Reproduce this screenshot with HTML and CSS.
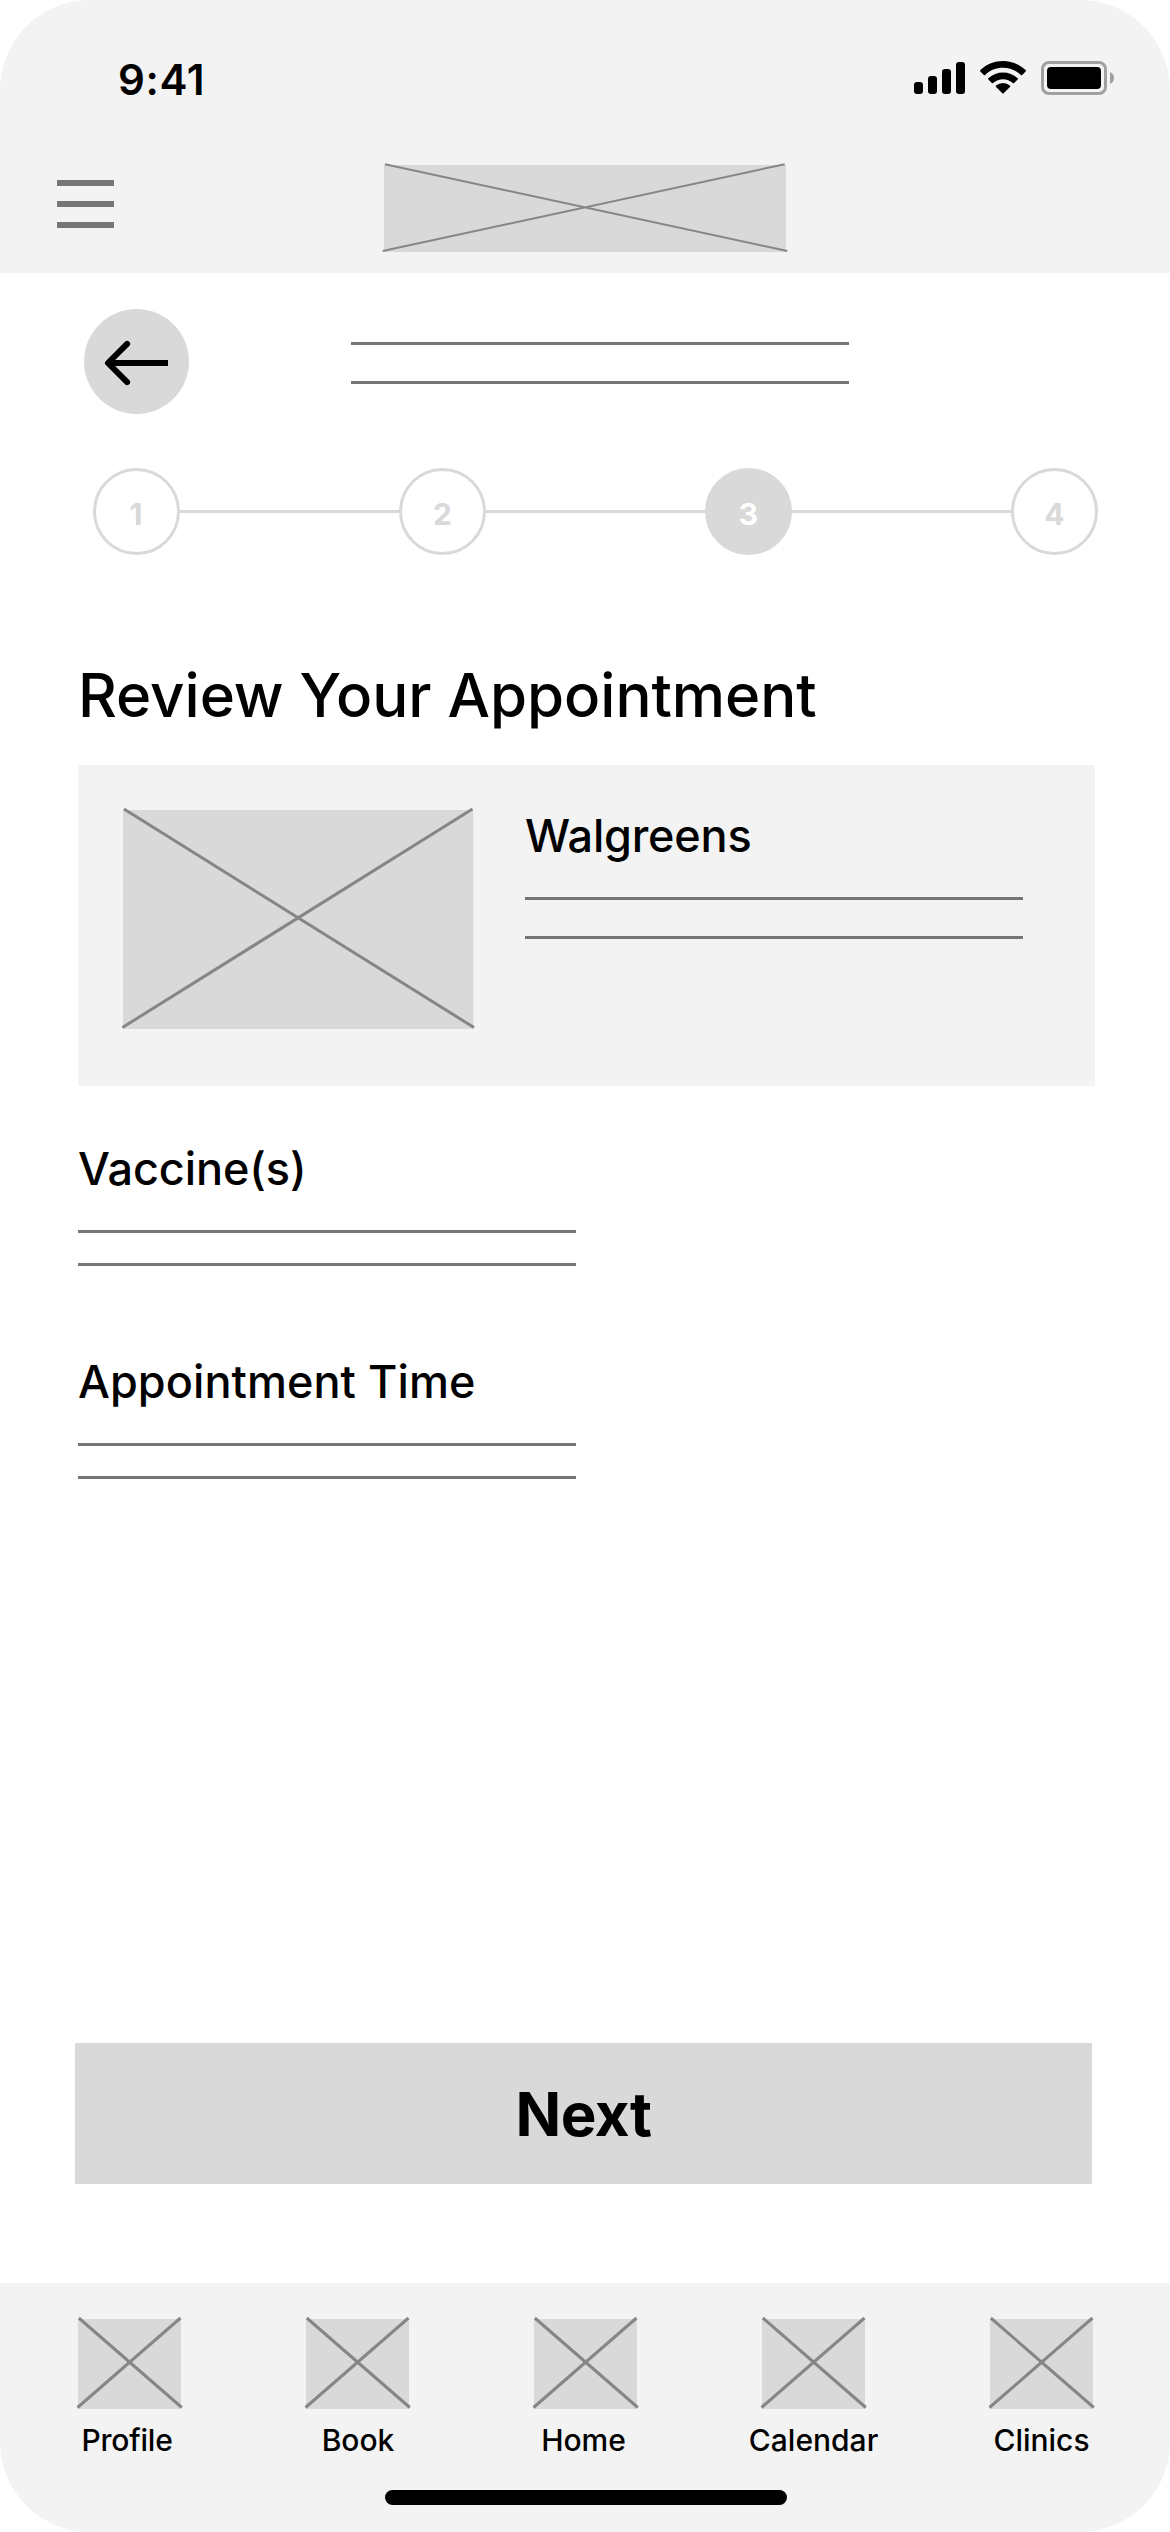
FILE: index.html
```html
<!DOCTYPE html>
<html lang="en">
<head>
<meta charset="utf-8">
<title>Review Your Appointment</title>
<link rel="stylesheet" href="styles.css">
</head>
<body>
<div class="screen">
  <header class="top">
    <div class="status">
      <span class="clock">9:41</span>
      <svg class="status-icons" width="204" height="40" viewBox="912 58 204 40">
        <rect x="914" y="82" width="9" height="12" rx="3"/>
        <rect x="928" y="76" width="9" height="18" rx="3"/>
        <rect x="942" y="69" width="9" height="25" rx="3"/>
        <rect x="956" y="62" width="9" height="32" rx="3"/>
        <path transform="translate(980.1 61) scale(3)" d="M7.637 2.277c2.216 0 4.347.852 5.953 2.379.12.118.314.116.433-.004l1.156-1.166a.32.32 0 0 0-.003-.456C10.961-1.01 4.311-1.01.096 3.03a.32.32 0 0 0-.003.456L1.25 4.652c.119.12.312.122.433.004 1.606-1.527 3.738-2.379 5.954-2.379ZM7.637 6.073c1.217 0 2.391.453 3.293 1.27.123.116.315.113.434-.006l1.154-1.167a.32.32 0 0 0-.004-.459c-2.748-2.556-7.004-2.556-9.752 0a.32.32 0 0 0-.005.459l1.155 1.167c.119.119.311.122.433.006.902-.817 2.075-1.27 3.292-1.27ZM9.95 8.627a.31.31 0 0 0-.01-.454 3.57 3.57 0 0 0-4.607 0 .31.31 0 0 0-.01.454l2.098 2.117a.3.3 0 0 0 .432 0Z"/>
        <rect class="battery-shell" x="1042.5" y="62.5" width="63" height="31" rx="6.5"/>
        <rect x="1047" y="67" width="54" height="22" rx="4"/>
        <path class="battery-cap" d="M1110 72c2.400 1 4 3.300 4 6s-1.600 5-4 6z"/>
      </svg>
    </div>
    <div class="brand-row">
      <div class="menu"><i></i><i></i><i></i></div>
      <svg class="logo" width="402" height="87" viewBox="0 0 402 87">
        <rect width="402" height="87"/>
        <path d="M1-.8 403.300 86M400.700-.8-1.300 86"/>
      </svg>
    </div>
  </header>

  <main class="content">
    <div class="title-row">
      <div class="back">
        <svg width="105" height="105" viewBox="0 0 105 105"><path d="M84 54H24"/><path class="head" d="M43.100 34.900 24 54l19.100 19.100"/></svg>
      </div>
      <div class="lines wide"><i></i><i></i></div>
    </div>

    <div class="steps">
      <span class="step first">1</span><i></i>
      <span class="step">2</span><i></i>
      <span class="step current">3</span><i></i>
      <span class="step">4</span>
    </div>

    <h1>Review Your Appointment</h1>

    <section class="card">
      <svg class="photo" width="350" height="219" viewBox="0 0 350 219">
        <rect width="350.300" height="219"/>
        <path d="M1-1 351 217.500M349.500-1-.6 217.500"/>
      </svg>
      <div class="place">
        <h2 class="place-name">Walgreens</h2>
        <div class="lines wide"><i></i><i></i></div>
      </div>
    </section>

    <section class="field">
      <h2 class="vaccine">Vaccine(s)</h2>
      <div class="lines"><i></i><i></i></div>
    </section>
    <section class="field">
      <h2 class="time">Appointment Time</h2>
      <div class="lines"><i></i><i></i></div>
    </section>

    <div class="next">Next</div>
  </main>

  <footer class="bottom">
    <nav class="tabs">
      <div class="tab"><svg width="103" height="90" viewBox="0 0 103 90"><rect width="103" height="90"/><path d="M.8-1 103.800 88.500M102.500-1-.5 88.500"/></svg><span class="profile">Profile</span></div>
      <div class="tab"><svg width="103" height="90" viewBox="0 0 103 90"><rect width="103" height="90"/><path d="M.8-1 103.800 88.500M102.500-1-.5 88.500"/></svg><span class="book">Book</span></div>
      <div class="tab"><svg width="103" height="90" viewBox="0 0 103 90"><rect width="103" height="90"/><path d="M.8-1 103.800 88.500M102.500-1-.5 88.500"/></svg><span class="home">Home</span></div>
      <div class="tab"><svg width="103" height="90" viewBox="0 0 103 90"><rect width="103" height="90"/><path d="M.8-1 103.800 88.500M102.500-1-.5 88.500"/></svg><span>Calendar</span></div>
      <div class="tab"><svg width="103" height="90" viewBox="0 0 103 90"><rect width="103" height="90"/><path d="M.8-1 103.800 88.500M102.500-1-.5 88.500"/></svg><span>Clinics</span></div>
    </nav>
    <div class="home-bar"></div>
  </footer>
</div>
</body>
</html>
```
FILE: styles.css
```css
* { box-sizing: border-box; }
body { margin: 0; background: #fff; }
h1, h2 { margin: 0; font-weight: 500; }
svg { display: block; overflow: visible; flex: none; }

.screen {
  width: 1170px;
  height: 2532px;
  display: flex;
  flex-direction: column;
  overflow: hidden;
  border-radius: 90px;
  background: #fff;
  color: #000;
  font-family: Inter, "Liberation Sans", sans-serif;
}

/* Header */
.top { height: 273px; background: #f3f3f3; }
.status {
  height: 165px;
  padding: 58px 54px 0 118px;
  display: flex;
  justify-content: space-between;
  align-items: flex-start;
}
.clock { font-size: 42px; line-height: 44px; font-weight: 600; letter-spacing: .6px; }
.battery-shell { fill: none; stroke: #a0a0a0; stroke-width: 3; }
.battery-cap { fill: #a0a0a0; }
.brand-row { display: flex; padding-left: 57px; }
.menu {
  width: 57px;
  margin: 15px 270px 0 0;
  display: flex;
  flex-direction: column;
  gap: 15px;
}
.menu i { height: 6px; background: #767676; }

/* Crossed placeholder boxes */
.logo rect, .photo rect, .tab rect { fill: #d9d9d9; }
.logo path, .photo path, .tab path { fill: none; stroke: #868686; stroke-width: 3; }
.logo path { stroke-width: 2; }

/* Placeholder text lines */
.lines { width: 498px; display: flex; flex-direction: column; gap: 30px; }
.lines.wide { gap: 36px; }
.lines i { height: 3px; background: #767676; }

.content { flex: 1; display: flex; flex-direction: column; padding: 36px 75px 99px 78px; }
.title-row { display: flex; padding-left: 6px; }
.title-row .lines { margin: 33px 0 0 162px; }
.back { width: 105px; height: 105px; border-radius: 50%; background: #d9d9d9; }
.back path { fill: none; stroke: #000; stroke-width: 6; }
.back .head { stroke-linecap: round; stroke-linejoin: round; }

.steps { display: flex; align-items: center; width: 1005px; margin: 54px 0 0 15px; }
.steps i { flex: 1; height: 3px; background: #d9d9d9; }
.step {
  width: 87px;
  height: 87px;
  padding-top: 5px;
  display: flex;
  align-items: center;
  justify-content: center;
  border: 3px solid #d9d9d9;
  border-radius: 50%;
  color: #d9d9d9;
  font-size: 30px;
  line-height: 36px;
  font-weight: 700;
}
.step.first { padding-right: 1px; }
.step.current { background: #d9d9d9; color: #fff; }

h1 { margin-top: 104px; font-size: 60px; line-height: 72px; white-space: nowrap; letter-spacing: -.03px; }
h2 { font-size: 45px; line-height: 54px; white-space: nowrap; }

.card {
  width: 1017px;
  height: 321px;
  margin: 34px 0 39px;
  padding: 45px;
  display: flex;
  gap: 52px;
  background: #f3f3f3;
}
.place-name { margin: -1px 0 34px; letter-spacing: -.2px; }
.field { height: 213px; padding-top: 17px; }
.field h2 { margin-bottom: 34px; }
.vaccine { letter-spacing: -.08px; }
.time { letter-spacing: .07px; }

.next {
  width: 1017px;
  height: 141px;
  margin: auto 0 0 -3px;
  display: flex;
  align-items: center;
  justify-content: center;
  background: #d9d9d9;
  font-size: 60px;
  font-weight: 700;
  letter-spacing: -.5px;
}

/* Footer */
.bottom { height: 249px; padding: 36px 77px 0 78px; background: #f3f3f3; }
.tabs { height: 171px; display: flex; justify-content: space-between; }
.tab {
  width: 103px;
  display: flex;
  flex-direction: column;
  align-items: center;
  gap: 13px;
  font-size: 30px;
  line-height: 36px;
  font-weight: 500;
}
.profile { margin-right: 5px; letter-spacing: -.2px; }
.book { margin-left: 1px; }
.home { margin-right: 4px; }
.home-bar { width: 402px; height: 15px; margin: 0 auto; border-radius: 7.5px; background: #000; }
```
